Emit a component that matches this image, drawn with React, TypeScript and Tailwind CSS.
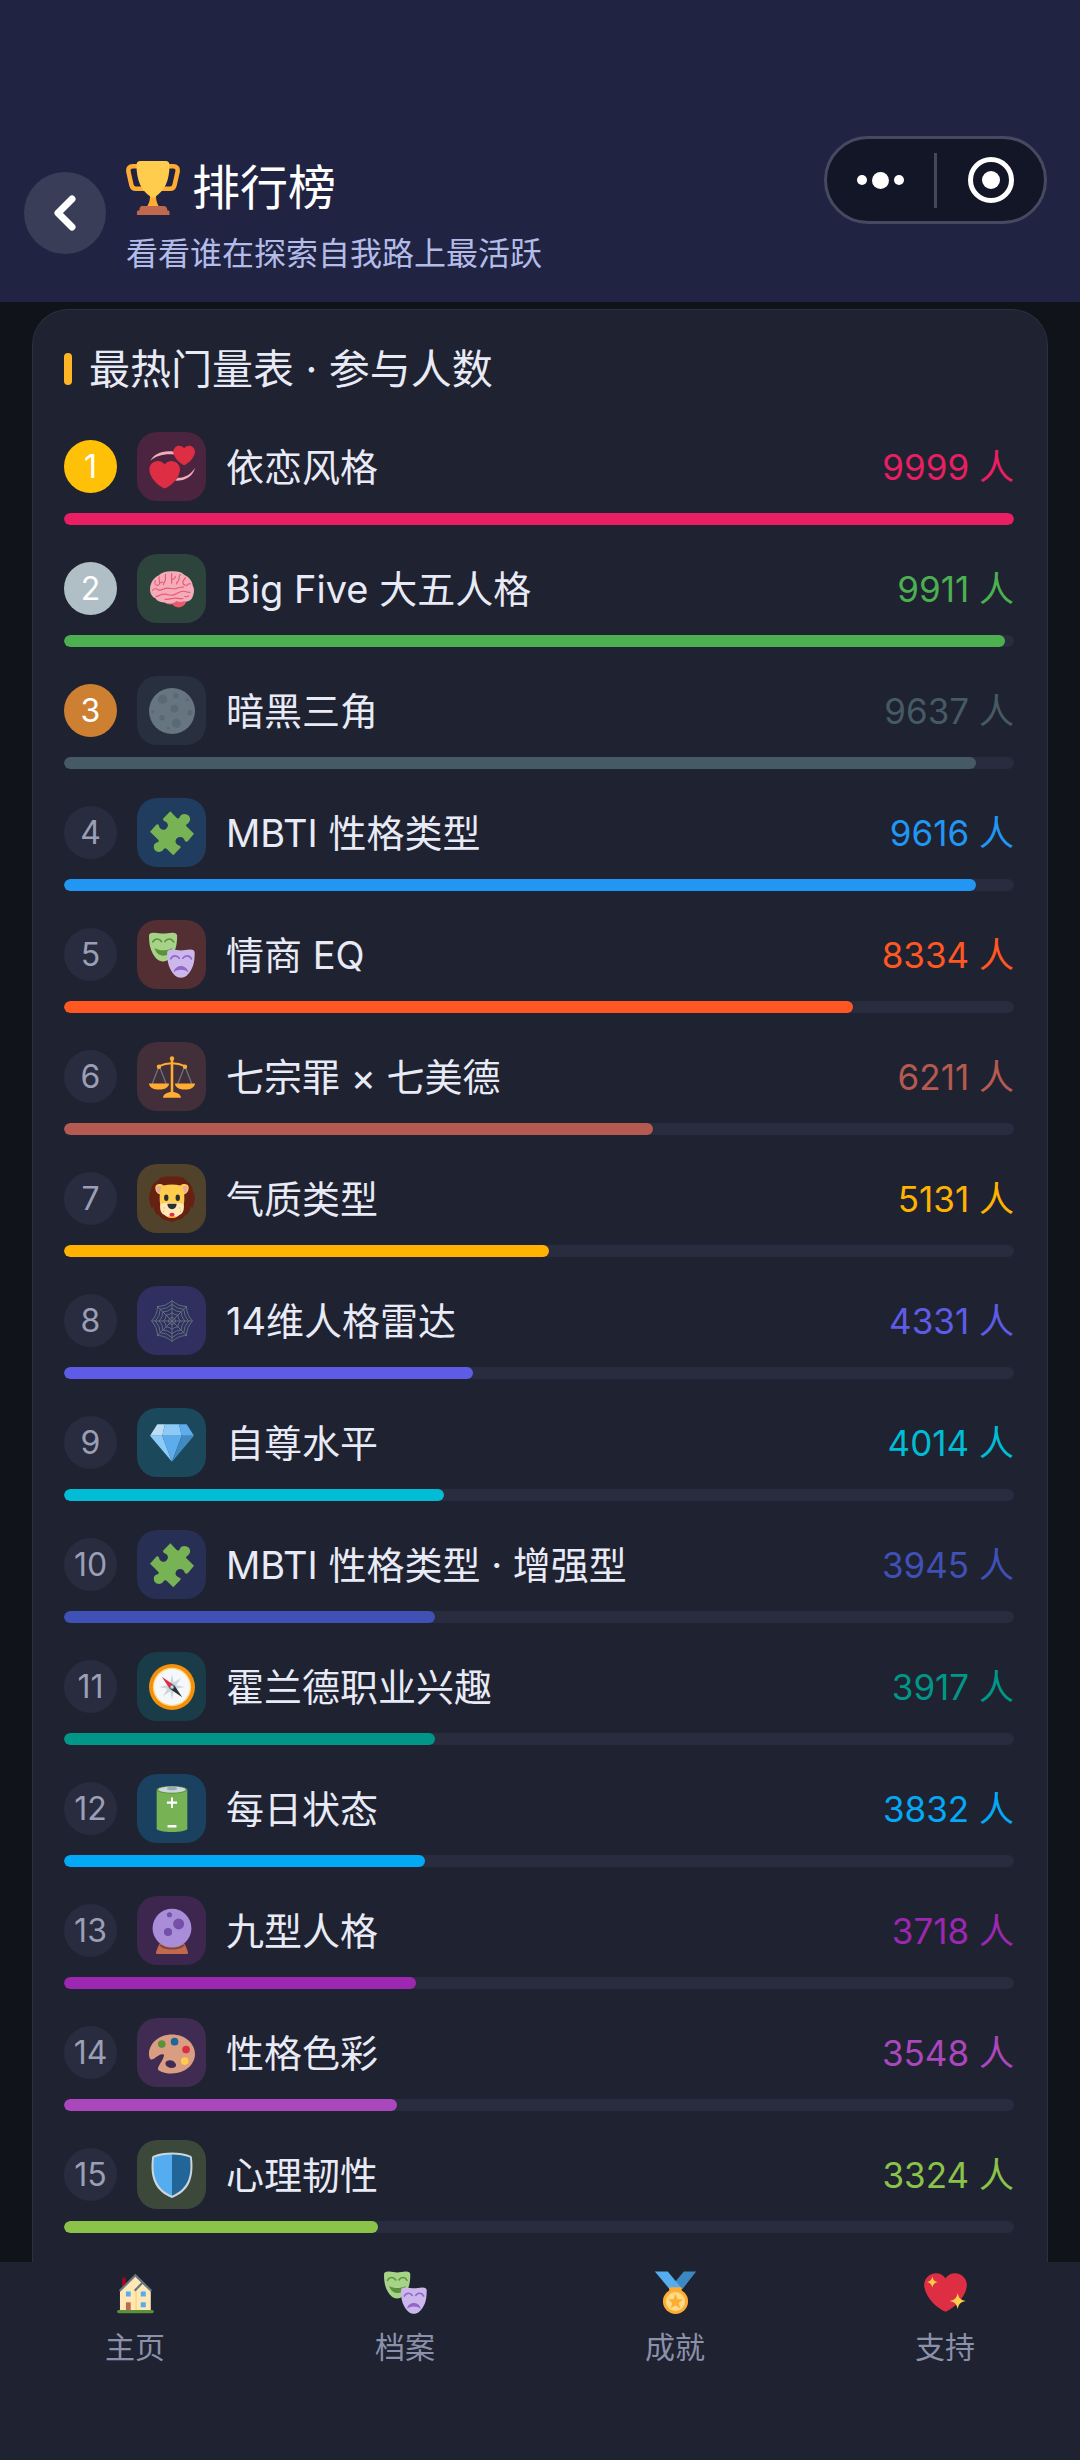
import React from 'react';
import { ChevronLeft } from 'lucide-react';
import clsx from 'clsx';

const HEART =
  'M35.885 11.833c0-5.45-4.418-9.868-9.867-9.868-3.308 0-6.227 1.633-8.018 4.129-1.791-2.496-4.71-4.129-8.017-4.129-5.45 0-9.868 4.417-9.868 9.868 0 .772.098 1.52.266 2.241C1.751 22.587 11.216 31.568 18 34.034c6.783-2.466 16.249-11.447 17.617-19.959.17-.721.268-1.469.268-2.242z';

const MASK =
  'M0 3C0 1 1.5.4 4 .5c3 .3 5 .7 7 .7s5-.4 7-.7c2.500-.1 4 .5 4 2.500 0 5-.5 10-3 14-2 3.500-4.500 6-8 6s-6-2.500-8-6C.6 13 0 8 0 3z';

const Emoji: React.FC<{ className?: string; children: React.ReactNode }> = ({ className, children }) => (
  <svg viewBox="0 0 36 36" className={clsx('shrink-0', className)} aria-hidden="true">
    {children}
  </svg>
);

const Trophy = () => (
  <>
    <path
      fill="none"
      stroke="#FFAC33"
      strokeWidth="3"
      d="M9 3.500H4.500C2.300 3.500 1.300 5 1.600 7l2 9c.4 1.800 1.500 2.500 3 2.500H13M27 3.500h4.500c2.200 0 3.200 1.500 2.900 3.500l-2 9c-.4 1.800-1.500 2.500-3 2.500H23"
    />
    <path fill="#FFAC33" d="M16 23h4c0 3 .5 5 2 7.500h-8c1.500-2.500 2-4.500 2-7.500z" />
    <path fill="#FFCC4D" d="M9.500 0h17C28 0 29 1 29 2.500 29 13 26 20 18.800 24.300c-.5.3-1.100.3-1.600 0C10 20 7 13 7 2.500 7 1 8 0 9.500 0z" />
    <path fill="#C1694F" d="M11 30h14c1.500 0 2.500 1 2.500 2.500v.5H28c.7 0 1 .4 1 1v2H7.300v-2c0-.6.3-1 1-1H9v-.5C9 31 9.500 30 11 30z" />
  </>
);

const Hearts = () => (
  <>
    <path fill="#F4ABBA" d="M1 13.300C3.500 7.800 11 4.500 19.500 6v2.300C12 7.500 5.500 9.200 1 13.300zM36 18.500c-1.500 6.500-7 10.300-15.500 10.200l2-2.200C28.500 26.300 33 23.500 36 18.500z" />
    <path fill="#DD2E44" transform="translate(.2 12) scale(.67)" d={HEART} />
    <path fill="#DD2E44" transform="translate(18.950 .4) scale(.475)" d={HEART} />
  </>
);

const Brain = () => (
  <>
    <path fill="#EA596E" d="M11 27c4-1 13-2 18.500-.5 0 2.500-2.500 5.900-6 5.900-3 0-4-1-5-2.400-2 .5-5.500 0-7.500-3z" />
    <path fill="#F4ABBA" d="M.8 18.500C.8 13 4 9 7.500 7.500 10 4.800 14 4 18 4.200c4-.2 7.500.6 9.500 2.600 4 1.600 6.500 5.200 6.800 8.700 1.300 2 1.200 5.500.2 7.500-.8 3.500-3.500 5.300-7 4.500-2 .8-4 .8-6-.2-2.500 2.200-6 2.700-9.500 1.200C8 28.500 6 27 5 25.300c-2.500-1-4.200-4-4.200-6.800z" />
    <g fill="none" stroke="#EA596E" strokeWidth=".9" strokeLinecap="round">
      <path d="M2.800 19c1-1.500 3-1.500 4.200-.5 2 1.200 4-.7 6-1 3-.6 5 .8 8 .2 2.500-.6 4-1.700 6-1.200" />
      <path d="M5.500 24c3-.6 4-2.300 7-2 3 .4 4 1.500 7 .6 3-.8 4-3 7.500-2.800 2.500.1 3.500 1.200 5 .8" />
      <path d="M12.500 26c2 .5 5-.5 7-.8 2-.3 4.500.6 7 .2" />
      <path d="M8 8.500c-.6 2 .6 3 .3 5-.2 1.500-1.300 1.800-2.300 1.500M10.800 12.500l-2.200.8M13 6.500c-.6 1.500.2 2.800-.2 4.500-.3 1.500-1.500 2-1.500 3.500M17.700 6v7.500M17.700 10.500c2 0 2.800-.8 2.800-2.500M24.500 6.500c-1.500 2-.5 3.500-1.500 5-.6 1-1.500 1-1.500 2.500M28.500 9c-.5 1.500-2 2-2 3.500s.7 2.500 2 2.500M32.500 14c-1.500-.3-2.500.3-3 1.500M31 23.500c-1 .7-2 .7-3 .3M5 11.500c-.8 1-.7 2 0 3" />
    </g>
  </>
);

const CRATERS = [
  [10.7, 8.8, 3.6],
  [21, 6, 2.1],
  [30, 9.1, 1.2],
  [19.8, 16.2, 3],
  [2.9, 18.5, 1.2],
  [32, 19.3, 2],
  [10.2, 23.2, 2.1],
  [21.4, 27.6, 3.6],
  [15, 31.3, 1.2],
];

const Moon = () => (
  <>
    <circle cx="18" cy="18" r="18" fill="#66757F" />
    {CRATERS.map(([cx, cy, r]) => (
      <circle key={`${cx}-${cy}`} cx={cx} cy={cy} r={r} fill="#5B6876" />
    ))}
  </>
);

const Puzzle = () => (
  <path
    fill="#77B255"
    d="M16.700 1l4.800 5c1 1 2.300.7 2.700-1C25 3 28 2.500 30 3.800c2.800 1.500 2.900 4.900.5 6.700-1.500.9-2 1.500-1 2.500l5.700 5.500-4.700 5.700c-1 1-2.400.8-2.700-.7-.8-2.500-3.800-3-5.800-1.500-2 2-1.500 4.500 1 5.500 1.800.5 2.300 1.500 1.300 2.500L19 35.500l-5-5c-1-1-2-.8-2.700.5C10 33.500 6 33.300 4.500 31.300 3 29 4 26 6 25.500c2-.5 2-1.500 1-2.500l-6.200-6 4.700-5.200c1-1 2.300-.8 2.500 1.200.5 2.500 4 3.500 6 1 2-2.500 0-4.500-1.500-5-1.500-.5-2-1.500-1-2.700z"
  />
);

const Masks = () => (
  <>
    <path fill="#A6D388" d={MASK} />
    <path fill="none" stroke="#5C913B" strokeWidth="1.300" strokeLinecap="round" d="M3 7.800c1.600-3 5-3 6.800-.3M12.500 7.500c1.800-2.700 5.200-2.700 6.800.3" />
    <path fill="#5C913B" d="M4.300 12.500c4 2.400 9.500 2.400 14 0-1 3.500-3.500 6-7 6s-6-2.500-7-6z" />
    <path fill="#CBB7EA" transform="translate(14.200 13.300) scale(.98)" d={MASK} />
    <path fill="none" stroke="#9266CC" strokeWidth="1.300" strokeLinecap="round" d="M17 21c1.500-3 5-3 6.700-.5M26.500 20.500c1.800-2.500 5.200-2.500 6.700.5" />
    <path fill="#9266CC" d="M19.300 31.500c.5-3 3-4.800 5.700-4.800s5.200 1.800 5.700 4.800c-3.500-2.500-8-2.500-11.400 0z" />
  </>
);

const Scales = () => (
  <>
    <path fill="none" stroke="#66757F" strokeWidth="1" d="M7.500 10.500l-5 13M8.500 10.500l5 13M27.500 10.500l-5 13M28.500 10.500l5 13" />
    <path fill="none" stroke="#FFAC33" strokeWidth="1.500" d="M8 9.500c6-3 14-3 20 0" />
    <g fill="#FFAC33">
      <path d="M17 3h2v28h-2z" />
      <circle cx="18" cy="3.500" r="1.700" />
      <circle cx="7.800" cy="10" r="1.700" />
      <circle cx="28.200" cy="10" r="1.700" />
      <path d="M0 23h15.700c0 3-3.500 4.800-7.850 4.800S0 26 0 23zM20.300 23H36c0 3-3.500 4.800-7.850 4.800S20.300 26 20.300 23zM11 34.200c0-2.400 3-4.400 7-4.400s7 2 7 4.400z" />
    </g>
  </>
);

const Lion = () => (
  <>
    <path
      fill="#662113"
      d="M10.500 1.300L12 .3h12l1.500 1 1.500-.3 2.500 3.200c3 1.300 4.800 4.800 4.700 7.300 1.800 3 2.300 6.500 1 9.500-.2 2-1 3.500-1.700 4.500l-.7-2c-.5 3-1.500 5.500-3.300 7.500l-.5-1.500c-1 2-2.500 3.500-4.500 4.500l-2.500.5L18 36l-3.500-1-3-1c-2-1-3.500-2.500-4.500-4.500l-.5 1.500c-1.800-2-2.800-4.500-3.300-7.500l-.7 2C1.500 24 .9 22.500.7 20.500c-1.300-3-.8-6.500 1-9.500C1.600 8.500 3.500 5.500 6.500 4.200L9 1z"
    />
    <path fill="#FFCC4D" d="M5 8.500C5.500 6 9 5.700 11.500 7.500c4-1.200 9-1.200 13 0C27 5.700 30.500 6 31 8.500c.5 3-1.500 5.500-3.500 6 .3 3 .2 6-.5 9-1 4-3 8.500-9 9-6-.5-8-5-9-9-.7-3-.8-6-.5-9-2-.5-4-3-3.500-6z" />
    <path fill="#E6AAAA" d="M6 9c.5-1.500 2.500-1.500 4-.5C9 10 8.800 11.500 8.500 13.500 6.500 12.500 5.700 11 6 9zM30 9c-.5-1.500-2.500-1.500-4-.5 1 1.500 1.200 3 1.500 5 2-1 2.800-2.500 2.500-4.500z" />
    <path fill="#FFE8B6" d="M9 22c3-1 6-1 9-1s6 0 9 1c1 4-.5 8-3.500 8.700-1.500 1.500-3.500 1.800-5.500 1.800s-4-.3-5.500-1.800C9.500 30 8 26 9 22z" />
    <path fill="#292F33" d="M14.500 21.700h7c.5 2-1.500 4.300-3.500 4.300s-4-2.300-3.500-4.300z" />
    <ellipse cx="13.500" cy="17" rx="1.700" ry="2.600" fill="#292F33" />
    <ellipse cx="22.500" cy="17" rx="1.700" ry="2.600" fill="#292F33" />
    <path fill="#FFAC33" d="M14.500 32c2-1.300 5-1.300 7 0-1 1.200-6 1.200-7 0z" />
    <ellipse cx="18" cy="30.200" rx="2" ry="1.500" fill="#DD2E44" />
    <g fill="#FFAC33">
      <circle cx="12" cy="25" r=".5" />
      <circle cx="11.500" cy="27.500" r=".5" />
      <circle cx="24" cy="25" r=".5" />
      <circle cx="24.500" cy="27.500" r=".5" />
    </g>
  </>
);

// One strand ring of the web: eight points joined by threads that sag to the middle
const webRing = (r: number) => {
  const at = (radius: number, step: number) => {
    const a = (step * Math.PI) / 4 - Math.PI / 2;
    return `${(18 + radius * Math.cos(a)).toFixed(2)} ${(18 + radius * Math.sin(a)).toFixed(2)}`;
  };
  let d = `M${at(r, 0)}`;
  for (let i = 0; i < 8; i++) d += `Q${at(r * 0.78, i + 0.5)} ${at(r, i + 1)}`;
  return d;
};

const Web = () => (
  <g fill="none" stroke="#66757F" strokeWidth=".7">
    <path d="M18 2v32M2 18h32M6.300 6.300l23.400 23.400M29.700 6.300L6.300 29.700" />
    {[3, 6.5, 10, 13, 16].map((r) => (
      <path key={r} d={webRing(r)} />
    ))}
  </g>
);

const Gem = () => (
  <>
    <path fill="#BDDDF4" d="M6.500 3.400h6l-2.100 8.900H.8z" />
    <path fill="#8CCAF7" d="M12.500 3.400h11l2.100 8.900H10.400z" />
    <path fill="#5DADEC" d="M23.500 3.400h6l5.700 8.900h-9.600z" />
    <path fill="#8CCAF7" d="M.8 12.300h9.600L18 32.600z" />
    <path fill="#5DADEC" d="M10.400 12.300h15.200L18 32.600z" />
    <path fill="#4289C1" d="M25.600 12.300h9.600L18 32.600z" />
  </>
);

const Compass = () => (
  <>
    <circle cx="18" cy="18" r="18" fill="#F4900C" />
    <circle cx="18" cy="18" r="15" fill="#FFD983" />
    <circle cx="18" cy="18" r="14" fill="#F5F8FA" />
    <path fill="#CCD6DD" d="M18 8l1.700 8.300L28 18l-8.300 1.700L18 28l-1.700-8.300L8 18l8.300-1.700z" />
    <path fill="#CCD6DD" d="M11 25l5-8.500 9-5.500-5.500 8.500z" />
    <path fill="#DD2E44" d="M10 10l9.500 6.500-3.200 3z" />
    <path fill="#292F33" d="M26 26l-9.500-6.500 3.200-3z" />
    <circle cx="18" cy="18" r="1.900" fill="#66757F" />
    <circle cx="18" cy="18" r="1.200" fill="#CCD6DD" />
  </>
);

const Battery = () => (
  <>
    <path fill="#77B255" d="M6 3h24v30.500c0 1.500-5.400 2.500-12 2.500S6 35 6 33.500z" />
    <ellipse cx="18" cy="3" rx="12" ry="3" fill="#5C913B" />
    <ellipse cx="18" cy="2.800" rx="10.800" ry="2.400" fill="#CCD6DD" />
    <ellipse cx="18" cy="1.900" rx="4" ry="1.400" fill="#9AAAB4" />
    <path fill="#FFF" d="M17.200 9h1.600v3.200H22v1.700h-3.200v3.300h-1.600v-3.300H14v-1.700h3.200zM14.500 30.500h7v2h-7z" />
  </>
);

const CrystalBall = () => (
  <>
    <path fill="#C1694F" d="M8 28h20l2.500 6.500c.3.900-.2 1.500-1 1.500h-23c-.8 0-1.300-.6-1-1.500z" />
    <path fill="#8A4633" d="M7.700 28.500h20.600c-1 2.300-5 4-10.300 4s-9.300-1.700-10.300-4z" />
    <circle cx="18" cy="15.800" r="15.200" fill="#AA8DD8" />
    <circle cx="16" cy="5.300" r="2" fill="#7450A8" />
    <circle cx="23.200" cy="12.500" r="4.300" fill="#7450A8" />
    <circle cx="14.900" cy="18.800" r="3.200" fill="#7450A8" />
  </>
);

const Palette = () => (
  <>
    <path
      fill="#D99E82"
      fillRule="evenodd"
      d="M18 3.500c10 0 18 6.800 18 15.300S28 34 18 34c-4 0-8-.8-10.300-2.400-1-.8-.9-1.800-.3-2.800 1.500-3 4-6 4.300-8.800.1-1.300-1.200-1.300-2.500-.8-2.700 1-5 3.700-7.200 3.900C.6 23.100 0 21 0 18.800 0 10.300 8 3.500 18 3.500zM13 25.500c-.6 1.600.8 3.300 3.200 4 2.300.5 4.500-.1 4.900-1.600.4-1.600-1.200-3.500-3.500-4.100-2.200-.5-4.100.2-4.600 1.700z"
    />
    <circle cx="10" cy="11" r="3" fill="#5C913B" />
    <circle cx="20" cy="9.100" r="3" fill="#269" />
    <circle cx="29" cy="15.300" r="3" fill="#DD2E44" />
    <circle cx="28" cy="24.300" r="3" fill="#FFCC4D" />
  </>
);

const Shield = () => (
  <>
    <path fill="#CCD6DD" d="M18 .4c5.500 0 10.500.8 14.500 2.600.7.3 1 .8 1.100 1.500.8 7 .6 13-1.600 18.500C29.500 29.500 24 33.500 18 36 12 33.500 6.500 29.500 4 23 1.800 17.500 1.600 11.500 2.400 4.500c.1-.7.400-1.200 1.100-1.500C7.500 1.200 12.500.4 18 .4z" />
    <path fill="#55ACEE" d="M18 1.900c-5 0-9.800.7-14.100 2.500-.7 7-.5 12.600 1.400 17.600C7.600 28 12.500 32 18 34.300z" />
    <path fill="#269" d="M18 1.900c5 0 9.800.7 14.100 2.500.7 7 .5 12.600-1.400 17.600C28.400 28 23.500 32 18 34.300z" />
  </>
);

const House = () => (
  <>
    <path fill="#A0041E" d="M6.700 5.500h3.200V15H6.700z" />
    <path fill="#FFE8B6" d="M5 16.500L17.800 4l6 6.500 7 6V33H5z" />
    <path fill="#FFD983" d="M17.700 16.500h1.500V33h-1.500z" />
    <path fill="none" stroke="#66757F" strokeWidth="1.800" d="M4.700 16.700L17.900 3.500l13.400 13.200M23.800 9.900l-6.500 6.700" />
    <path fill="#55ACEE" d="M10 17.200h4v4.200h-4zM22.400 17.200h4.200v4.200h-4.200zM22.400 26.200h4.200v4.200h-4.200z" />
    <path fill="#C1694F" d="M10 26.200h4V33h-4z" />
    <rect x="2.600" y="32.700" width="30.700" height="2.600" rx="1.300" fill="#5C913B" />
  </>
);

const Medal = () => (
  <>
    <path fill="#3B88C3" d="M25 .5h10.300L23.600 15.500 17.700 9z" />
    <path fill="#55ACEE" d="M.7.5h10.800L23.200 14.500l-9.500 1.500z" />
    <rect x="12.800" y="13.500" width="10.400" height="4.500" rx="1" fill="#FFAC33" />
    <circle cx="18" cy="25.500" r="10.500" fill="#FFAC33" />
    <circle cx="18" cy="25.500" r="8" fill="#FFD983" />
    <path fill="#FFAC33" d="M18 19.300l1.700 4.300 4.500.3-3.500 2.900 1.200 4.400-3.900-2.500-3.900 2.500 1.200-4.400-3.500-2.900 4.500-.3z" />
  </>
);

const SparkHeart = () => (
  <>
    <path fill="#DD2E44" d={HEART} />
    <path
      fill="#FFCC4D"
      d="M7 4.500c.7 3 1.700 4 4.700 4.700-3 .7-4 1.700-4.700 4.700-.7-3-1.700-4-4.700-4.700 3-.7 4-1.700 4.700-4.700zM28.200 18.500c1 4.500 2.200 5.700 6.700 6.700-4.500 1-5.700 2.200-6.700 6.700-1-4.500-2.200-5.700-6.700-6.700 4.500-1 5.700-2.200 6.700-6.700z"
    />
  </>
);

const scales = [
  { name: '依恋风格', count: 9999, icon: Hearts, tile: 'bg-[#4b2440]', text: 'text-[#e91e63]', bar: 'bg-[#e91e63]' },
  { name: 'Big Five 大五人格', count: 9911, icon: Brain, tile: 'bg-[#2c443b]', text: 'text-[#4caf50]', bar: 'bg-[#4caf50]' },
  { name: '暗黑三角', count: 9637, icon: Moon, tile: 'bg-[#28303f]', text: 'text-[#455a64]', bar: 'bg-[#455a64]' },
  { name: 'MBTI 性格类型', count: 9616, icon: Puzzle, tile: 'bg-[#203c5e]', text: 'text-[#2196f3]', bar: 'bg-[#2196f3]' },
  { name: '情商 EQ', count: 8334, icon: Masks, tile: 'bg-[#532f33]', text: 'text-[#ff5722]', bar: 'bg-[#ff5722]' },
  { name: '七宗罪 × 七美德', count: 6211, icon: Scales, tile: 'bg-[#422f3a]', text: 'text-[#b55a50]', bar: 'bg-[#b55a50]' },
  { name: '气质类型', count: 5131, icon: Lion, tile: 'bg-[#51432b]', text: 'text-[#ffb300]', bar: 'bg-[#ffb300]' },
  { name: '14维人格雷达', count: 4331, icon: Web, tile: 'bg-[#2f305f]', text: 'text-[#5e5ce6]', bar: 'bg-[#5e5ce6]' },
  { name: '自尊水平', count: 4014, icon: Gem, tile: 'bg-[#1b485a]', text: 'text-[#00bcd4]', bar: 'bg-[#00bcd4]' },
  { name: 'MBTI 性格类型 · 增强型', count: 3945, icon: Puzzle, tile: 'bg-[#282f55]', text: 'text-[#3f51b5]', bar: 'bg-[#3f51b5]' },
  { name: '霍兰德职业兴趣', count: 3917, icon: Compass, tile: 'bg-[#1a3c48]', text: 'text-[#009688]', bar: 'bg-[#009688]' },
  { name: '每日状态', count: 3832, icon: Battery, tile: 'bg-[#1b4160]', text: 'text-[#03a9f4]', bar: 'bg-[#03a9f4]' },
  { name: '九型人格', count: 3718, icon: CrystalBall, tile: 'bg-[#3d274f]', text: 'text-[#9c27b0]', bar: 'bg-[#9c27b0]' },
  { name: '性格色彩', count: 3548, icon: Palette, tile: 'bg-[#402c52]', text: 'text-[#ab47bc]', bar: 'bg-[#ab47bc]' },
  { name: '心理韧性', count: 3324, icon: Shield, tile: 'bg-[#3b483a]', text: 'text-[#8bc34a]', bar: 'bg-[#8bc34a]' },
];

const medals = ['bg-[#ffc107] text-white', 'bg-[#b0bec5] text-white', 'bg-[#cd7f32] text-white'];

const tabs = [
  { label: '主页', icon: House },
  { label: '档案', icon: Masks },
  { label: '成就', icon: Medal },
  { label: '支持', icon: SparkHeart },
];

const App: React.FC = () => {
  const max = scales[0].count;

  return (
    <div className="flex min-h-screen flex-col bg-[#10131a] font-['Inter','Noto_Sans_CJK_SC',sans-serif] text-[#e8eaf6]">
      <header className="flex items-start bg-[#202442] pt-[136px] pr-[33px] pb-6 pl-6">
        <button
          aria-label="返回"
          className="mt-9 flex size-[82px] shrink-0 items-center justify-center rounded-full bg-[#3a3d57] text-white"
        >
          <ChevronLeft className="size-14" strokeWidth={3} />
        </button>
        <div className="ml-5 pt-4">
          <h1 className="flex items-center gap-3 text-5xl leading-[72px] text-white">
            <Emoji className="size-[54px]">
              <Trophy />
            </Emoji>
            排行榜
          </h1>
          <p className="mt-[6px] text-[32px] leading-[48px] text-[#b3bbe8]">看看谁在探索自我路上最活跃</p>
        </div>
        <div className="ml-auto flex h-[88px] w-[223px] shrink-0 items-center rounded-full border-3 border-[#464a60] bg-[#131627] text-white">
          <button aria-label="更多" className="flex h-full flex-1 items-center justify-center gap-[5px]">
            <span className="size-[10px] rounded-full bg-white" />
            <span className="size-[17px] rounded-full bg-white" />
            <span className="size-[10px] rounded-full bg-white" />
          </button>
          <span className="h-[55px] w-[3px] bg-[#464856]" />
          <button aria-label="关闭" className="flex h-full flex-1 items-center justify-center">
            <span className="flex size-[46px] items-center justify-center rounded-full border-5 border-white">
              <span className="size-[18px] rounded-full bg-white" />
            </span>
          </button>
        </div>
      </header>

      <main className="flex flex-1 flex-col px-8 pt-[7px]">
        <section className="flex-1 rounded-t-[36px] border border-b-0 border-[#2d2f3c] bg-[#1f2230] pt-[35px] pr-[33px] pl-[31px]">
          <h2 className="flex items-center text-[41px] leading-[48px]">
            <span className="mr-[17px] h-8 w-2 rounded-full bg-[#ffb526]" />
            最热门量表 · 参与人数
          </h2>
          <ol className="mt-[39px]">
            {scales.map((item, i) => (
              <li key={item.name} className="mb-[29px]">
                <div className="flex items-center">
                  <span
                    className={clsx(
                      'flex size-[53px] shrink-0 items-center justify-center rounded-full text-[32px] leading-none',
                      medals[i] ?? 'bg-[#292b3e] text-[#9a9fb5]'
                    )}
                  >
                    {i + 1}
                  </span>
                  <span className={clsx('ml-5 flex size-[69px] shrink-0 items-center justify-center rounded-[20px]', item.tile)}>
                    <Emoji className="size-[46px]">
                      <item.icon />
                    </Emoji>
                  </span>
                  <span className="ml-5 flex-1 text-[38px] leading-[56px]">{item.name}</span>
                  <span className={clsx('text-[35px] leading-[56px]', item.text)}>{item.count} 人</span>
                </div>
                <div className="mt-3 h-3 overflow-hidden rounded-full bg-[#292b3e]">
                  <div
                    className={clsx('h-full rounded-full', item.bar)}
                    style={{ width: `${Math.round((item.count / max) * 100)}%` }}
                  />
                </div>
              </li>
            ))}
          </ol>
        </section>
      </main>

      <nav className="sticky bottom-0 grid grid-cols-4 bg-[#1f2230] pt-[9px] pb-[90px]">
        {tabs.map((tab) => (
          <a key={tab.label} href="#" className="flex flex-col items-center gap-[10px] text-[30px] leading-[47px] text-[#8b91ab]">
            <Emoji className="size-[43px]">
              <tab.icon />
            </Emoji>
            {tab.label}
          </a>
        ))}
      </nav>
    </div>
  );
};

export default App;
